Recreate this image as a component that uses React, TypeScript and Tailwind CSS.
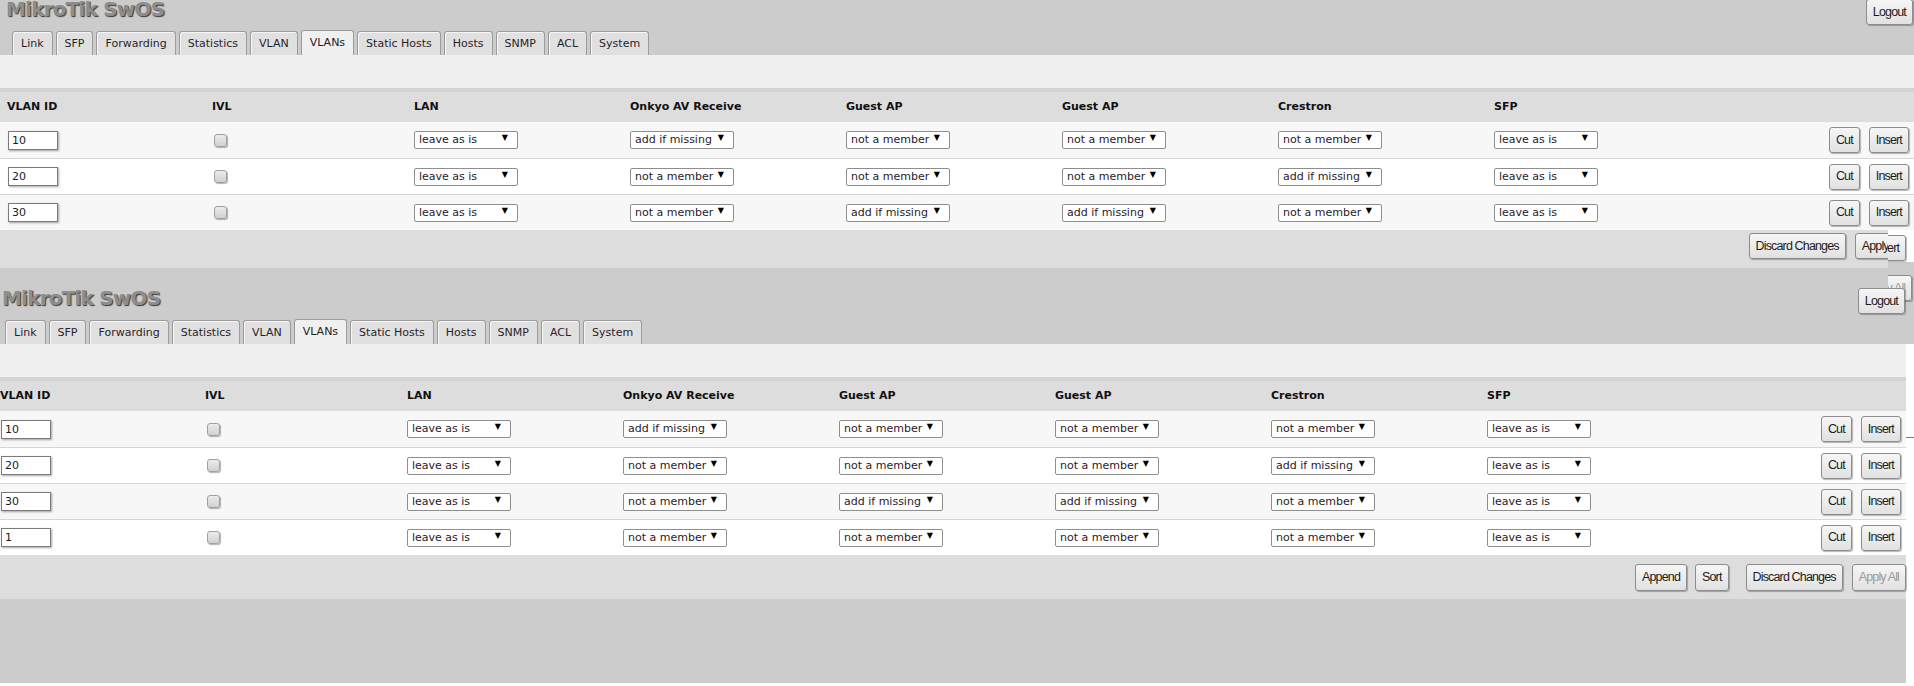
import React from 'react';

type VlanRow = { id: string; cells: string[] };

const tabs = ['Link', 'SFP', 'Forwarding', 'Statistics', 'VLAN', 'VLANs', 'Static Hosts', 'Hosts', 'SNMP', 'ACL', 'System'];
const ports = ['LAN', 'Onkyo AV Receive', 'Guest AP', 'Guest AP', 'Crestron', 'SFP'];

const allRows: VlanRow[] = [
  { id: '10', cells: ['leave as is', 'add if missing', 'not a member', 'not a member', 'not a member', 'leave as is'] },
  { id: '20', cells: ['leave as is', 'not a member', 'not a member', 'not a member', 'add if missing', 'leave as is'] },
  { id: '30', cells: ['leave as is', 'not a member', 'add if missing', 'add if missing', 'not a member', 'leave as is'] },
  { id: '1', cells: ['leave as is', 'not a member', 'not a member', 'not a member', 'not a member', 'leave as is'] },
];

const Button: React.FC<{ label: string; disabled?: boolean; className?: string }> = ({ label, disabled, className }) => (
  <button
    className={`shrink-0 h-[26px] px-[6px] border border-[#8c8c8c] rounded-[3px] bg-linear-to-b from-[#f6f6f6] to-[#e1e1e1] shadow-[1px_1px_1px_rgba(0,0,0,0.28)] font-['Liberation_Sans',sans-serif] text-[12.5px] tracking-[-0.85px] leading-none whitespace-nowrap ${
      disabled ? 'text-[#9b9b9b]' : 'text-[#1c1c1c]'
    } ${className ?? ''}`}
  >
    {label}
  </button>
);

const FakeSelect: React.FC<{ value: string }> = ({ value }) => (
  <div className="relative w-[104px] h-[18px] border border-[#8e8e8e] rounded-[2px] bg-white pl-[4px] text-[11px] leading-[16px] text-[#2a1a2a] whitespace-nowrap">
    {value}
    <span className="absolute right-[9px] top-[1px] text-[8px] leading-[10px] text-black">▼</span>
  </div>
);

const colWidths = ['w-[206px] pl-[7px]', 'w-[202px] pl-[6px]', 'w-[216px] pl-[6px]', 'w-[216px] pl-[6px]', 'w-[216px] pl-[6px]', 'w-[216px] pl-[6px]', 'w-[216px] pl-[6px]', 'w-[216px] pl-[6px]'];

const SwosPage: React.FC<{
  rows: VlanRow[];
  className: string;
  titlePad: string;
  footerClass: string;
  footer: React.ReactNode;
  children?: React.ReactNode;
}> = ({ rows, className, titlePad, footerClass, footer, children }) => (
  <div className={`flex flex-col shrink-0 ${className}`}>
    {/* header with title, logout and tabs */}
    <div className="h-[76px] bg-[#cccccc] flex flex-col">
      <div className={`flex justify-between items-start pt-[19px] ${titlePad}`}>
        <div className="text-[20px] leading-[22px] font-bold tracking-[-0.8px] text-[#8d8d8d] [text-shadow:1px_1px_1px_#3a3a3a]">MikroTik SwOS</div>
        <Button label="Logout" className="relative z-10 mt-[1px] mr-[1px]" />
      </div>
      <div className="mt-auto flex items-end gap-[3px] pl-[12px]">
        {tabs.map((t) =>
          t === 'VLANs' ? (
            <div key={t} className="h-[25px] px-[8px] border border-b-0 border-[#9c9c9c] rounded-t-[3px] bg-[#f0f0f0] text-[11px] leading-[24px] text-[#222]">
              {t}
            </div>
          ) : (
            <div key={t} className="h-[24px] px-[8px] border border-b-0 border-[#9c9c9c] rounded-t-[3px] bg-[#e0e0e0] shadow-[inset_1px_1px_0_#f6f6f6] text-[11px] leading-[23px] text-[#2a1f2a]">
              {t}
            </div>
          )
        )}
      </div>
    </div>
    <div className="h-[33px] bg-[#f0f0f0]" />
    <div className="h-[4px] bg-[#d3d3d3]" />

    {/* table head */}
    <div className="h-[30px] bg-[#dddddd] flex items-center text-[11px] font-bold text-[#111]">
      <div className={colWidths[0]}>VLAN ID</div>
      <div className={colWidths[1]}>IVL</div>
      {ports.map((p, i) => (
        <div key={i} className={colWidths[i + 2]}>
          {p}
        </div>
      ))}
    </div>

    {rows.map((r, idx) => (
      <div
        key={r.id}
        className={`h-[36px] flex items-center ${idx % 2 === 0 ? 'bg-[#f7f7f7]' : 'bg-white'} ${idx > 0 ? 'border-t border-[#d6d6d6]' : ''}`}
      >
        <div className={colWidths[0]}>
          <div className="ml-[1px] w-[50px] h-[19px] border border-[#7a7a7a] bg-white shadow-[1px_1px_2px_rgba(0,0,0,0.35)] pl-[3px] text-[11px] leading-[17px] text-[#1a1a1a]">
            {r.id}
          </div>
        </div>
        <div className={colWidths[1]}>
          <div className="ml-[2px] w-[13px] h-[13px] rounded-[3px] border border-[#a0a0a0] bg-linear-to-b from-[#ececec] to-[#d0d0d0] shadow-[1px_1px_1px_rgba(0,0,0,0.3)]" />
        </div>
        {r.cells.map((c, i) => (
          <div key={i} className={colWidths[i + 2]}>
            <FakeSelect value={c} />
          </div>
        ))}
        <div className="flex-1 flex justify-end gap-[9px] pr-[5px]">
          <Button label="Cut" />
          <Button label="Insert" />
        </div>
      </div>
    ))}

    <div className={`bg-[#dddddd] flex justify-end items-start ${footerClass}`}>{footer}</div>
    {children}
  </div>
);

export default function App() {
  return (
    <div className="relative w-[1914px] h-[686px] overflow-hidden bg-white font-['DejaVu_Sans',sans-serif]">
      <SwosPage
        rows={allRows.slice(0, 3)}
        className="w-[1914px] mt-[-21px]"
        titlePad="pl-[6px]"
        footerClass="h-[38px] pt-[3px] pr-[5px] gap-[9px]"
        footer={
          <>
            <Button label="Discard Changes" />
            <Button label="Apply All" />
          </>
        }
      />
      <SwosPage
        rows={allRows}
        className="w-[1913px] ml-[-7px]"
        titlePad="pl-[9px]"
        footerClass="h-[44px] pt-[9px] pr-0"
        footer={
          <>
            <Button label="Append" className="h-[27px]" />
            <Button label="Sort" className="h-[27px] ml-[8px]" />
            <Button label="Discard Changes" className="h-[27px] ml-[17px]" />
            <Button label="Apply All" disabled className="h-[27px] ml-[9px]" />
          </>
        }
      >
        <div className="h-[84px] bg-[#cccccc]" />
      </SwosPage>

      {/* repaint leftovers at the right edge */}
      <div className="absolute left-[1888px] top-[230px] w-[26px] h-[114px] overflow-hidden bg-[#cccccc] flex flex-col items-start">
        <div className="w-full h-[32px] bg-white shrink-0">
          <Button label="Insert" className="ml-[-22px] mt-[5px]" />
        </div>
        <Button label="Apply All" disabled className="ml-[-30px] mt-[13px]" />
      </div>
      <div className="absolute left-[1906px] top-[437px] w-[8px] h-[1px] bg-[#7a7a7a]" />
    </div>
  );
}
